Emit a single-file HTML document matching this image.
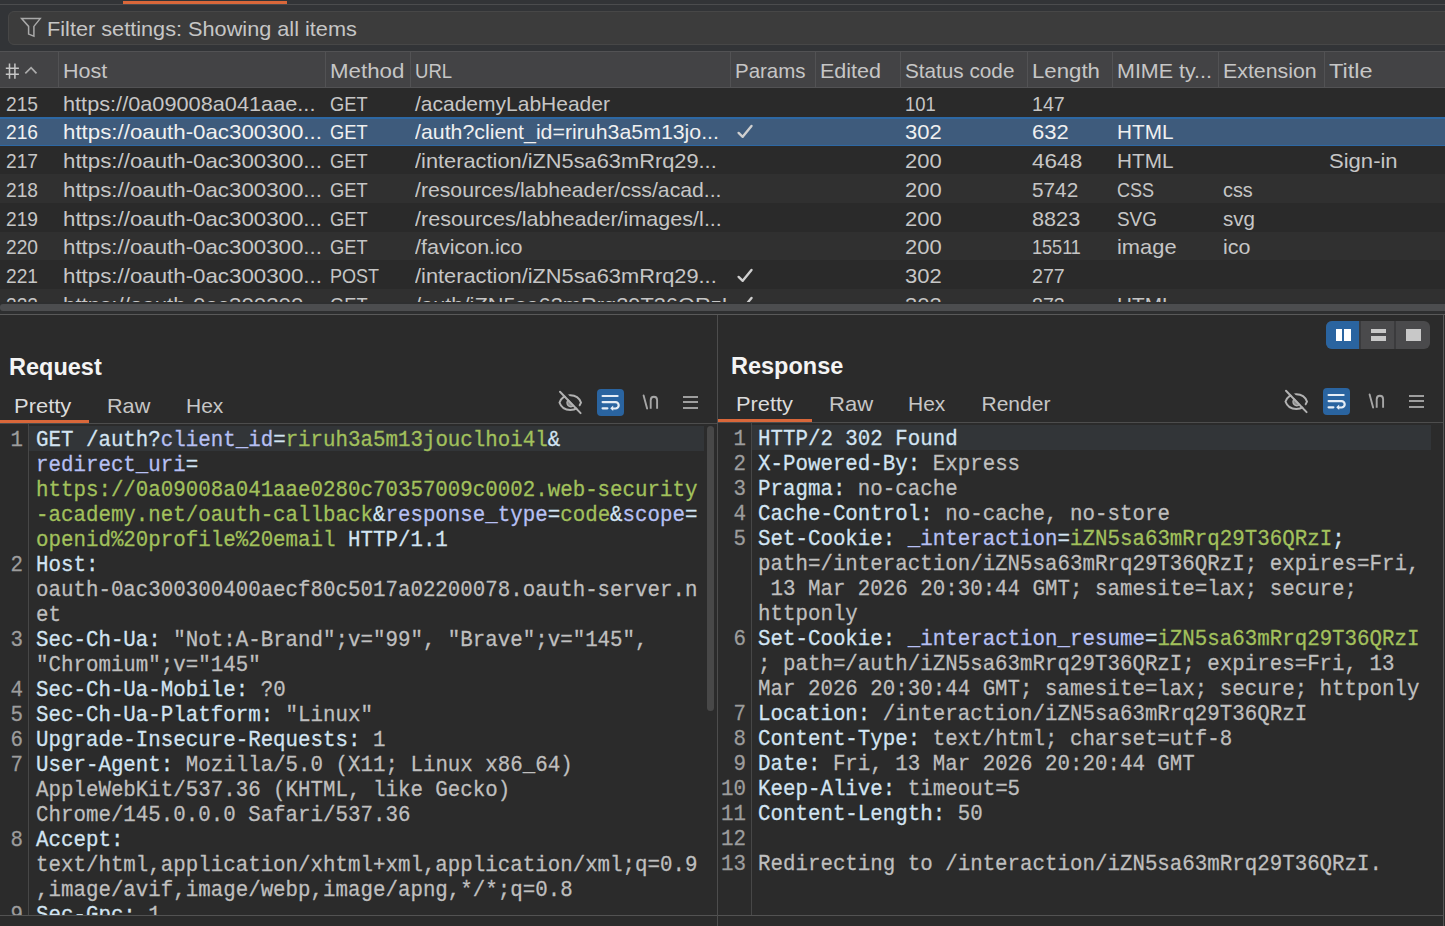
<!DOCTYPE html><html><head><meta charset="utf-8"><style>html,body{margin:0;padding:0;}body{width:1445px;height:926px;overflow:hidden;position:relative;background:#2b2b2b;font-family:'Liberation Sans', sans-serif;}</style></head><body>
<div style="position:absolute;left:0px;top:0px;width:1445px;height:51px;background:#323437;"></div>
<div style="position:absolute;left:0px;top:4px;width:1445px;height:1px;background:#4b4c4e;"></div>
<div style="position:absolute;left:123px;top:1px;width:164px;height:3px;background:#d9673a;"></div>
<div style="position:absolute;left:8px;top:11px;width:1445px;height:34px;background:#3c3c3c;box-sizing:border-box;border:1px solid #474747;border-radius:6px;"></div>
<svg style="position:absolute;left:19px;top:16px" width="24" height="22" viewBox="0 0 24 22"><path d="M2.6 2.6 H21.2 L14.9 10.4 V20.1 L9.6 18.1 V10.4 Z" fill="none" stroke="#a9a9a9" stroke-width="1.5" stroke-linejoin="miter"/></svg>
<div style="position:absolute;left:46.5px;top:15.92px;line-height:26px;font-size:21px;font-family:'Liberation Sans', sans-serif;font-weight:normal;color:#c6c6c6;white-space:pre;transform:scaleX(1.0330);transform-origin:0 0;">Filter settings: Showing all items</div>
<div style="position:absolute;left:0px;top:51px;width:1445px;height:37px;background:#434345;"></div>
<div style="position:absolute;left:0px;top:51px;width:1445px;height:1px;background:#525254;"></div>
<div style="position:absolute;left:0px;top:87px;width:1445px;height:1px;background:#525254;"></div>
<div style="position:absolute;left:58px;top:52px;width:1px;height:35px;background:#525254;"></div>
<div style="position:absolute;left:325px;top:52px;width:1px;height:35px;background:#525254;"></div>
<div style="position:absolute;left:410px;top:52px;width:1px;height:35px;background:#525254;"></div>
<div style="position:absolute;left:730px;top:52px;width:1px;height:35px;background:#525254;"></div>
<div style="position:absolute;left:815px;top:52px;width:1px;height:35px;background:#525254;"></div>
<div style="position:absolute;left:900px;top:52px;width:1px;height:35px;background:#525254;"></div>
<div style="position:absolute;left:1027px;top:52px;width:1px;height:35px;background:#525254;"></div>
<div style="position:absolute;left:1112px;top:52px;width:1px;height:35px;background:#525254;"></div>
<div style="position:absolute;left:1218px;top:52px;width:1px;height:35px;background:#525254;"></div>
<div style="position:absolute;left:1324px;top:52px;width:1px;height:35px;background:#525254;"></div>
<svg style="position:absolute;left:0;top:55px" width="24" height="30" viewBox="0 0 24 30"><path d="M9.5 8.6 V23.7 M14.9 8.6 V23.7 M5.8 13.2 H18.9 M5.8 19.3 H18.9" stroke="#c6c6c6" stroke-width="1.5"/></svg>
<div style="position:absolute;left:63px;top:58.22px;line-height:26px;font-size:21px;font-family:'Liberation Sans', sans-serif;font-weight:normal;color:#c6c6c6;white-space:pre;transform:scaleX(1.0233);transform-origin:0 0;">Host</div>
<div style="position:absolute;left:330px;top:58.22px;line-height:26px;font-size:21px;font-family:'Liberation Sans', sans-serif;font-weight:normal;color:#c6c6c6;white-space:pre;transform:scaleX(1.0609);transform-origin:0 0;">Method</div>
<div style="position:absolute;left:415px;top:58.22px;line-height:26px;font-size:21px;font-family:'Liberation Sans', sans-serif;font-weight:normal;color:#c6c6c6;white-space:pre;transform:scaleX(0.8829);transform-origin:0 0;">URL</div>
<div style="position:absolute;left:735px;top:58.22px;line-height:26px;font-size:21px;font-family:'Liberation Sans', sans-serif;font-weight:normal;color:#c6c6c6;white-space:pre;transform:scaleX(0.9750);transform-origin:0 0;">Params</div>
<div style="position:absolute;left:820px;top:58.22px;line-height:26px;font-size:21px;font-family:'Liberation Sans', sans-serif;font-weight:normal;color:#c6c6c6;white-space:pre;transform:scaleX(1.0241);transform-origin:0 0;">Edited</div>
<div style="position:absolute;left:905px;top:58.22px;line-height:26px;font-size:21px;font-family:'Liberation Sans', sans-serif;font-weight:normal;color:#c6c6c6;white-space:pre;transform:scaleX(0.9864);transform-origin:0 0;">Status code</div>
<div style="position:absolute;left:1032px;top:58.22px;line-height:26px;font-size:21px;font-family:'Liberation Sans', sans-serif;font-weight:normal;color:#c6c6c6;white-space:pre;transform:scaleX(1.0571);transform-origin:0 0;">Length</div>
<div style="position:absolute;left:1117px;top:58.22px;line-height:26px;font-size:21px;font-family:'Liberation Sans', sans-serif;font-weight:normal;color:#c6c6c6;white-space:pre;transform:scaleX(1.0220);transform-origin:0 0;">MIME ty...</div>
<div style="position:absolute;left:1223px;top:58.22px;line-height:26px;font-size:21px;font-family:'Liberation Sans', sans-serif;font-weight:normal;color:#c6c6c6;white-space:pre;transform:scaleX(1.0154);transform-origin:0 0;">Extension</div>
<div style="position:absolute;left:1329px;top:58.22px;line-height:26px;font-size:21px;font-family:'Liberation Sans', sans-serif;font-weight:normal;color:#c6c6c6;white-space:pre;transform:scaleX(1.1184);transform-origin:0 0;">Title</div>
<svg style="position:absolute;left:24px;top:65px" width="14" height="10" viewBox="0 0 14 10"><path d="M1.3 8.3 L7.1 2.7 L12.5 8.3" fill="none" stroke="#ababab" stroke-width="1.7"/></svg>
<div style="position:absolute;left:0;top:88px;width:1445px;height:214px;overflow:hidden;">
<div style="position:absolute;left:0px;top:0px;width:1445px;height:29px;background:#2a2a2a;"></div>
<div style="position:absolute;left:6px;top:2.72px;line-height:26px;font-size:21px;font-family:'Liberation Sans', sans-serif;font-weight:normal;color:#c6c6c6;white-space:pre;transform:scaleX(0.9147);transform-origin:0 0;">215</div>
<div style="position:absolute;left:63px;top:2.72px;line-height:26px;font-size:21px;font-family:'Liberation Sans', sans-serif;font-weight:normal;color:#c6c6c6;white-space:pre;transform:scaleX(1.0343);transform-origin:0 0;">https://0a09008a041aae...</div>
<div style="position:absolute;left:330px;top:2.72px;line-height:26px;font-size:21px;font-family:'Liberation Sans', sans-serif;font-weight:normal;color:#c6c6c6;white-space:pre;transform:scaleX(0.8698);transform-origin:0 0;">GET</div>
<div style="position:absolute;left:415px;top:2.72px;line-height:26px;font-size:21px;font-family:'Liberation Sans', sans-serif;font-weight:normal;color:#c6c6c6;white-space:pre;">/academyLabHeader</div>
<div style="position:absolute;left:905px;top:2.72px;line-height:26px;font-size:21px;font-family:'Liberation Sans', sans-serif;font-weight:normal;color:#c6c6c6;white-space:pre;transform:scaleX(0.8765);transform-origin:0 0;">101</div>
<div style="position:absolute;left:1032px;top:2.72px;line-height:26px;font-size:21px;font-family:'Liberation Sans', sans-serif;font-weight:normal;color:#c6c6c6;white-space:pre;transform:scaleX(0.9353);transform-origin:0 0;">147</div>
<div style="position:absolute;left:0px;top:29px;width:1445px;height:29px;background:#3e5b7c;"></div>
<div style="position:absolute;left:0px;top:29px;width:1445px;height:2px;background:#2d68a4;"></div>
<div style="position:absolute;left:0px;top:57px;width:1445px;height:1px;background:#2d68a4;"></div>
<div style="position:absolute;left:6px;top:31.47px;line-height:26px;font-size:21px;font-family:'Liberation Sans', sans-serif;font-weight:normal;color:#f0f0f0;white-space:pre;transform:scaleX(0.9147);transform-origin:0 0;">216</div>
<div style="position:absolute;left:63px;top:31.47px;line-height:26px;font-size:21px;font-family:'Liberation Sans', sans-serif;font-weight:normal;color:#f0f0f0;white-space:pre;transform:scaleX(1.0612);transform-origin:0 0;">https://oauth-0ac300300...</div>
<div style="position:absolute;left:330px;top:31.47px;line-height:26px;font-size:21px;font-family:'Liberation Sans', sans-serif;font-weight:normal;color:#f0f0f0;white-space:pre;transform:scaleX(0.8698);transform-origin:0 0;">GET</div>
<div style="position:absolute;left:415px;top:31.47px;line-height:26px;font-size:21px;font-family:'Liberation Sans', sans-serif;font-weight:normal;color:#f0f0f0;white-space:pre;transform:scaleX(1.0151);transform-origin:0 0;">/auth?client_id=riruh3a5m13jo...</div>
<svg style="position:absolute;left:735px;top:28.75px" width="24" height="29" viewBox="0 0 24 29"><path d="M3.6 15.9 L7.7 19.8 L16.5 8.9" fill="none" stroke="#cfcfcf" stroke-width="2.4" stroke-linecap="round" stroke-linejoin="round"/></svg>
<div style="position:absolute;left:905px;top:31.47px;line-height:26px;font-size:21px;font-family:'Liberation Sans', sans-serif;font-weight:normal;color:#f0f0f0;white-space:pre;transform:scaleX(1.0471);transform-origin:0 0;">302</div>
<div style="position:absolute;left:1032px;top:31.47px;line-height:26px;font-size:21px;font-family:'Liberation Sans', sans-serif;font-weight:normal;color:#f0f0f0;white-space:pre;transform:scaleX(1.0500);transform-origin:0 0;">632</div>
<div style="position:absolute;left:1117px;top:31.47px;line-height:26px;font-size:21px;font-family:'Liberation Sans', sans-serif;font-weight:normal;color:#f0f0f0;white-space:pre;transform:scaleX(0.9877);transform-origin:0 0;">HTML</div>
<div style="position:absolute;left:0px;top:58px;width:1445px;height:28px;background:#2a2a2a;"></div>
<div style="position:absolute;left:6px;top:60.22px;line-height:26px;font-size:21px;font-family:'Liberation Sans', sans-serif;font-weight:normal;color:#c6c6c6;white-space:pre;transform:scaleX(0.9147);transform-origin:0 0;">217</div>
<div style="position:absolute;left:63px;top:60.22px;line-height:26px;font-size:21px;font-family:'Liberation Sans', sans-serif;font-weight:normal;color:#c6c6c6;white-space:pre;transform:scaleX(1.0612);transform-origin:0 0;">https://oauth-0ac300300...</div>
<div style="position:absolute;left:330px;top:60.22px;line-height:26px;font-size:21px;font-family:'Liberation Sans', sans-serif;font-weight:normal;color:#c6c6c6;white-space:pre;transform:scaleX(0.8698);transform-origin:0 0;">GET</div>
<div style="position:absolute;left:415px;top:60.22px;line-height:26px;font-size:21px;font-family:'Liberation Sans', sans-serif;font-weight:normal;color:#c6c6c6;white-space:pre;transform:scaleX(1.0381);transform-origin:0 0;">/interaction/iZN5sa63mRrq29...</div>
<div style="position:absolute;left:905px;top:60.22px;line-height:26px;font-size:21px;font-family:'Liberation Sans', sans-serif;font-weight:normal;color:#c6c6c6;white-space:pre;transform:scaleX(1.0471);transform-origin:0 0;">200</div>
<div style="position:absolute;left:1032px;top:60.22px;line-height:26px;font-size:21px;font-family:'Liberation Sans', sans-serif;font-weight:normal;color:#c6c6c6;white-space:pre;transform:scaleX(1.0739);transform-origin:0 0;">4648</div>
<div style="position:absolute;left:1117px;top:60.22px;line-height:26px;font-size:21px;font-family:'Liberation Sans', sans-serif;font-weight:normal;color:#c6c6c6;white-space:pre;transform:scaleX(0.9877);transform-origin:0 0;">HTML</div>
<div style="position:absolute;left:1329px;top:60.22px;line-height:26px;font-size:21px;font-family:'Liberation Sans', sans-serif;font-weight:normal;color:#c6c6c6;white-space:pre;transform:scaleX(1.0500);transform-origin:0 0;">Sign-in</div>
<div style="position:absolute;left:0px;top:86px;width:1445px;height:29px;background:#303030;"></div>
<div style="position:absolute;left:6px;top:88.97px;line-height:26px;font-size:21px;font-family:'Liberation Sans', sans-serif;font-weight:normal;color:#c6c6c6;white-space:pre;transform:scaleX(0.9147);transform-origin:0 0;">218</div>
<div style="position:absolute;left:63px;top:88.97px;line-height:26px;font-size:21px;font-family:'Liberation Sans', sans-serif;font-weight:normal;color:#c6c6c6;white-space:pre;transform:scaleX(1.0612);transform-origin:0 0;">https://oauth-0ac300300...</div>
<div style="position:absolute;left:330px;top:88.97px;line-height:26px;font-size:21px;font-family:'Liberation Sans', sans-serif;font-weight:normal;color:#c6c6c6;white-space:pre;transform:scaleX(0.8698);transform-origin:0 0;">GET</div>
<div style="position:absolute;left:415px;top:88.97px;line-height:26px;font-size:21px;font-family:'Liberation Sans', sans-serif;font-weight:normal;color:#c6c6c6;white-space:pre;transform:scaleX(1.0099);transform-origin:0 0;">/resources/labheader/css/acad...</div>
<div style="position:absolute;left:905px;top:88.97px;line-height:26px;font-size:21px;font-family:'Liberation Sans', sans-serif;font-weight:normal;color:#c6c6c6;white-space:pre;transform:scaleX(1.0471);transform-origin:0 0;">200</div>
<div style="position:absolute;left:1032px;top:88.97px;line-height:26px;font-size:21px;font-family:'Liberation Sans', sans-serif;font-weight:normal;color:#c6c6c6;white-space:pre;transform:scaleX(0.9891);transform-origin:0 0;">5742</div>
<div style="position:absolute;left:1117px;top:88.97px;line-height:26px;font-size:21px;font-family:'Liberation Sans', sans-serif;font-weight:normal;color:#c6c6c6;white-space:pre;transform:scaleX(0.8571);transform-origin:0 0;">CSS</div>
<div style="position:absolute;left:1223px;top:88.97px;line-height:26px;font-size:21px;font-family:'Liberation Sans', sans-serif;font-weight:normal;color:#c6c6c6;white-space:pre;transform:scaleX(0.9452);transform-origin:0 0;">css</div>
<div style="position:absolute;left:0px;top:115px;width:1445px;height:29px;background:#2a2a2a;"></div>
<div style="position:absolute;left:6px;top:117.72px;line-height:26px;font-size:21px;font-family:'Liberation Sans', sans-serif;font-weight:normal;color:#c6c6c6;white-space:pre;transform:scaleX(0.9147);transform-origin:0 0;">219</div>
<div style="position:absolute;left:63px;top:117.72px;line-height:26px;font-size:21px;font-family:'Liberation Sans', sans-serif;font-weight:normal;color:#c6c6c6;white-space:pre;transform:scaleX(1.0612);transform-origin:0 0;">https://oauth-0ac300300...</div>
<div style="position:absolute;left:330px;top:117.72px;line-height:26px;font-size:21px;font-family:'Liberation Sans', sans-serif;font-weight:normal;color:#c6c6c6;white-space:pre;transform:scaleX(0.8698);transform-origin:0 0;">GET</div>
<div style="position:absolute;left:415px;top:117.72px;line-height:26px;font-size:21px;font-family:'Liberation Sans', sans-serif;font-weight:normal;color:#c6c6c6;white-space:pre;transform:scaleX(1.0269);transform-origin:0 0;">/resources/labheader/images/l...</div>
<div style="position:absolute;left:905px;top:117.72px;line-height:26px;font-size:21px;font-family:'Liberation Sans', sans-serif;font-weight:normal;color:#c6c6c6;white-space:pre;transform:scaleX(1.0471);transform-origin:0 0;">200</div>
<div style="position:absolute;left:1032px;top:117.72px;line-height:26px;font-size:21px;font-family:'Liberation Sans', sans-serif;font-weight:normal;color:#c6c6c6;white-space:pre;transform:scaleX(1.0326);transform-origin:0 0;">8823</div>
<div style="position:absolute;left:1117px;top:117.72px;line-height:26px;font-size:21px;font-family:'Liberation Sans', sans-serif;font-weight:normal;color:#c6c6c6;white-space:pre;transform:scaleX(0.9000);transform-origin:0 0;">SVG</div>
<div style="position:absolute;left:1223px;top:117.72px;line-height:26px;font-size:21px;font-family:'Liberation Sans', sans-serif;font-weight:normal;color:#c6c6c6;white-space:pre;transform:scaleX(0.9781);transform-origin:0 0;">svg</div>
<div style="position:absolute;left:0px;top:144px;width:1445px;height:28px;background:#303030;"></div>
<div style="position:absolute;left:6px;top:146.47px;line-height:26px;font-size:21px;font-family:'Liberation Sans', sans-serif;font-weight:normal;color:#c6c6c6;white-space:pre;transform:scaleX(0.9147);transform-origin:0 0;">220</div>
<div style="position:absolute;left:63px;top:146.47px;line-height:26px;font-size:21px;font-family:'Liberation Sans', sans-serif;font-weight:normal;color:#c6c6c6;white-space:pre;transform:scaleX(1.0612);transform-origin:0 0;">https://oauth-0ac300300...</div>
<div style="position:absolute;left:330px;top:146.47px;line-height:26px;font-size:21px;font-family:'Liberation Sans', sans-serif;font-weight:normal;color:#c6c6c6;white-space:pre;transform:scaleX(0.8698);transform-origin:0 0;">GET</div>
<div style="position:absolute;left:415px;top:146.47px;line-height:26px;font-size:21px;font-family:'Liberation Sans', sans-serif;font-weight:normal;color:#c6c6c6;white-space:pre;transform:scaleX(1.0240);transform-origin:0 0;">/favicon.ico</div>
<div style="position:absolute;left:905px;top:146.47px;line-height:26px;font-size:21px;font-family:'Liberation Sans', sans-serif;font-weight:normal;color:#c6c6c6;white-space:pre;transform:scaleX(1.0471);transform-origin:0 0;">200</div>
<div style="position:absolute;left:1032px;top:146.47px;line-height:26px;font-size:21px;font-family:'Liberation Sans', sans-serif;font-weight:normal;color:#c6c6c6;white-space:pre;transform:scaleX(0.8607);transform-origin:0 0;">15511</div>
<div style="position:absolute;left:1117px;top:146.47px;line-height:26px;font-size:21px;font-family:'Liberation Sans', sans-serif;font-weight:normal;color:#c6c6c6;white-space:pre;transform:scaleX(1.0411);transform-origin:0 0;">image</div>
<div style="position:absolute;left:1223px;top:146.47px;line-height:26px;font-size:21px;font-family:'Liberation Sans', sans-serif;font-weight:normal;color:#c6c6c6;white-space:pre;transform:scaleX(1.0231);transform-origin:0 0;">ico</div>
<div style="position:absolute;left:0px;top:172px;width:1445px;height:29px;background:#2a2a2a;"></div>
<div style="position:absolute;left:6px;top:175.22px;line-height:26px;font-size:21px;font-family:'Liberation Sans', sans-serif;font-weight:normal;color:#c6c6c6;white-space:pre;transform:scaleX(0.9147);transform-origin:0 0;">221</div>
<div style="position:absolute;left:63px;top:175.22px;line-height:26px;font-size:21px;font-family:'Liberation Sans', sans-serif;font-weight:normal;color:#c6c6c6;white-space:pre;transform:scaleX(1.0612);transform-origin:0 0;">https://oauth-0ac300300...</div>
<div style="position:absolute;left:330px;top:175.22px;line-height:26px;font-size:21px;font-family:'Liberation Sans', sans-serif;font-weight:normal;color:#c6c6c6;white-space:pre;transform:scaleX(0.8596);transform-origin:0 0;">POST</div>
<div style="position:absolute;left:415px;top:175.22px;line-height:26px;font-size:21px;font-family:'Liberation Sans', sans-serif;font-weight:normal;color:#c6c6c6;white-space:pre;transform:scaleX(1.0381);transform-origin:0 0;">/interaction/iZN5sa63mRrq29...</div>
<svg style="position:absolute;left:735px;top:172.5px" width="24" height="29" viewBox="0 0 24 29"><path d="M3.6 15.9 L7.7 19.8 L16.5 8.9" fill="none" stroke="#cfcfcf" stroke-width="2.4" stroke-linecap="round" stroke-linejoin="round"/></svg>
<div style="position:absolute;left:905px;top:175.22px;line-height:26px;font-size:21px;font-family:'Liberation Sans', sans-serif;font-weight:normal;color:#c6c6c6;white-space:pre;transform:scaleX(1.0471);transform-origin:0 0;">302</div>
<div style="position:absolute;left:1032px;top:175.22px;line-height:26px;font-size:21px;font-family:'Liberation Sans', sans-serif;font-weight:normal;color:#c6c6c6;white-space:pre;transform:scaleX(0.9353);transform-origin:0 0;">277</div>
<div style="position:absolute;left:0px;top:201px;width:1445px;height:29px;background:#303030;"></div>
<div style="position:absolute;left:6px;top:203.97px;line-height:26px;font-size:21px;font-family:'Liberation Sans', sans-serif;font-weight:normal;color:#c6c6c6;white-space:pre;transform:scaleX(0.9147);transform-origin:0 0;">222</div>
<div style="position:absolute;left:63px;top:203.97px;line-height:26px;font-size:21px;font-family:'Liberation Sans', sans-serif;font-weight:normal;color:#c6c6c6;white-space:pre;transform:scaleX(1.0612);transform-origin:0 0;">https://oauth-0ac300300...</div>
<div style="position:absolute;left:330px;top:203.97px;line-height:26px;font-size:21px;font-family:'Liberation Sans', sans-serif;font-weight:normal;color:#c6c6c6;white-space:pre;transform:scaleX(0.8698);transform-origin:0 0;">GET</div>
<div style="position:absolute;left:415px;top:203.97px;line-height:26px;font-size:21px;font-family:'Liberation Sans', sans-serif;font-weight:normal;color:#c6c6c6;white-space:pre;transform:scaleX(1.0381);transform-origin:0 0;">/auth/iZN5sa63mRrq29T36QRzI</div>
<svg style="position:absolute;left:735px;top:201.25px" width="24" height="29" viewBox="0 0 24 29"><path d="M3.6 15.9 L7.7 19.8 L16.5 8.9" fill="none" stroke="#cfcfcf" stroke-width="2.4" stroke-linecap="round" stroke-linejoin="round"/></svg>
<div style="position:absolute;left:905px;top:203.97px;line-height:26px;font-size:21px;font-family:'Liberation Sans', sans-serif;font-weight:normal;color:#c6c6c6;white-space:pre;transform:scaleX(1.0471);transform-origin:0 0;">302</div>
<div style="position:absolute;left:1032px;top:203.97px;line-height:26px;font-size:21px;font-family:'Liberation Sans', sans-serif;font-weight:normal;color:#c6c6c6;white-space:pre;transform:scaleX(0.9353);transform-origin:0 0;">873</div>
<div style="position:absolute;left:1117px;top:203.97px;line-height:26px;font-size:21px;font-family:'Liberation Sans', sans-serif;font-weight:normal;color:#c6c6c6;white-space:pre;transform:scaleX(0.9877);transform-origin:0 0;">HTML</div>
</div>
<div style="position:absolute;left:0px;top:302px;width:1445px;height:12px;background:#2e2f30;"></div>
<div style="position:absolute;left:0px;top:304px;width:1445px;height:7px;background:#4c4d4f;border-radius:3px 0 0 3px;"></div>
<div style="position:absolute;left:0px;top:314px;width:1445px;height:1px;background:#595959;"></div>
<div style="position:absolute;left:0px;top:915px;width:1443px;height:1px;background:#525252;"></div>
<div style="position:absolute;left:717px;top:315px;width:1px;height:611px;background:#4d4d4d;"></div>
<div style="position:absolute;left:1443px;top:315px;width:1px;height:611px;background:#565656;"></div>
<div style="position:absolute;left:9px;top:353.35px;line-height:29px;font-size:23.5px;font-family:'Liberation Sans', sans-serif;font-weight:bold;color:#f4f4f4;white-space:pre;">Request</div>
<div style="position:absolute;left:14px;top:392.72px;line-height:26px;font-size:21px;font-family:'Liberation Sans', sans-serif;font-weight:normal;color:#dcdcdc;white-space:pre;transform:scaleX(1.0450);transform-origin:0 0;">Pretty</div>
<div style="position:absolute;left:107.3px;top:392.72px;line-height:26px;font-size:21px;font-family:'Liberation Sans', sans-serif;font-weight:normal;color:#c6c6c6;white-space:pre;transform:scaleX(1.0300);transform-origin:0 0;">Raw</div>
<div style="position:absolute;left:186px;top:392.72px;line-height:26px;font-size:21px;font-family:'Liberation Sans', sans-serif;font-weight:normal;color:#c6c6c6;white-space:pre;">Hex</div>
<div style="position:absolute;left:0px;top:420px;width:89px;height:3px;background:#d9673a;"></div>
<div style="position:absolute;left:89px;top:423px;width:628px;height:1px;background:#4d4d4d;"></div>
<div style="position:absolute;left:0px;top:423px;width:89px;height:1px;background:#4d4d4d;"></div>
<div style="position:absolute;left:731px;top:351.85px;line-height:29px;font-size:23.5px;font-family:'Liberation Sans', sans-serif;font-weight:bold;color:#f4f4f4;white-space:pre;">Response</div>
<div style="position:absolute;left:736px;top:391.22px;line-height:26px;font-size:21px;font-family:'Liberation Sans', sans-serif;font-weight:normal;color:#dcdcdc;white-space:pre;transform:scaleX(1.0400);transform-origin:0 0;">Pretty</div>
<div style="position:absolute;left:829px;top:391.22px;line-height:26px;font-size:21px;font-family:'Liberation Sans', sans-serif;font-weight:normal;color:#c6c6c6;white-space:pre;transform:scaleX(1.0500);transform-origin:0 0;">Raw</div>
<div style="position:absolute;left:908px;top:391.22px;line-height:26px;font-size:21px;font-family:'Liberation Sans', sans-serif;font-weight:normal;color:#c6c6c6;white-space:pre;">Hex</div>
<div style="position:absolute;left:981.5px;top:391.22px;line-height:26px;font-size:21px;font-family:'Liberation Sans', sans-serif;font-weight:normal;color:#c6c6c6;white-space:pre;">Render</div>
<div style="position:absolute;left:718px;top:419px;width:94px;height:3px;background:#d9673a;"></div>
<div style="position:absolute;left:718px;top:422px;width:725px;height:1px;background:#4d4d4d;"></div>
<div style="position:absolute;left:1326px;top:321px;width:104px;height:28px;border-radius:6px;overflow:hidden;background:#4a4a4c"><div style="position:absolute;left:0;top:0;width:33px;height:28px;background:#2a64a0"></div><div style="position:absolute;left:33px;top:0;width:2px;height:28px;background:#3b3b3d"></div><div style="position:absolute;left:68px;top:0;width:2px;height:28px;background:#3b3b3d"></div><div style="position:absolute;left:9.5px;top:7.5px;width:6.5px;height:12.5px;background:#fff"></div><div style="position:absolute;left:18.2px;top:7.5px;width:6.5px;height:12.5px;background:#fff"></div><div style="position:absolute;left:44.5px;top:7.5px;width:15px;height:4.6px;background:#c8c8c8"></div><div style="position:absolute;left:44.5px;top:15px;width:15px;height:5px;background:#c8c8c8"></div><div style="position:absolute;left:79.5px;top:7.5px;width:15px;height:12.5px;background:#c8c8c8"></div></div>
<svg style="position:absolute;left:554px;top:386px" width="36" height="32" viewBox="0 0 36 32"><path d="M5.5 16.6 C9 6.8 23.5 6.8 27 16.6 C23.5 26.4 9 26.4 5.5 16.6 Z" fill="none" stroke="#b2b2b2" stroke-width="1.9"/><path d="M14.2 14.0 A3.3 3.3 0 0 0 19.6 19.6 Z" fill="#8c8c8c" stroke="#b2b2b2" stroke-width="1.4"/><path d="M7.7 4.1 L28.3 25.4" stroke="#2b2b2b" stroke-width="3"/><path d="M6 5.8 L26.6 27.1" stroke="#b2b2b2" stroke-width="2" stroke-linecap="round"/></svg>
<div style="position:absolute;left:597px;top:389px;width:27px;height:27px;border-radius:4px;background:#2a64a0"></div>
<svg style="position:absolute;left:597px;top:389px" width="27" height="27" viewBox="0 0 27 27"><path d="M5.6 7 H20.6" stroke="#e6edf5" stroke-width="2.2" stroke-linecap="round"/><path d="M5.6 13.1 H18.5 A3.2 3.2 0 0 1 18.5 19.5 H15.5" fill="none" stroke="#e6edf5" stroke-width="2.2" stroke-linecap="round"/><path d="M16.2 16.6 L13.2 19.3 L16.2 22 Z" fill="#e6edf5"/><path d="M5.6 19.3 H10.4" stroke="#e6edf5" stroke-width="2.2" stroke-linecap="round"/></svg>
<svg style="position:absolute;left:640px;top:392px" width="22" height="20" viewBox="0 0 22 20"><path d="M3.6 3.5 L7.1 16.6" stroke="#a6a6a6" stroke-width="1.9" stroke-linecap="round"/><path d="M10.7 16.8 V8.2 C10.7 3.6 17.1 3.6 17.1 8.2 V16.8" fill="none" stroke="#a6a6a6" stroke-width="1.9"/></svg>
<div style="position:absolute;left:683px;top:395.9px;width:15px;height:2px;background:#9e9e9e;"></div>
<div style="position:absolute;left:683px;top:401.45px;width:15px;height:2px;background:#9e9e9e;"></div>
<div style="position:absolute;left:683px;top:407.0px;width:15px;height:2px;background:#9e9e9e;"></div>
<svg style="position:absolute;left:1280px;top:384.7px" width="36" height="32" viewBox="0 0 36 32"><path d="M5.5 16.6 C9 6.8 23.5 6.8 27 16.6 C23.5 26.4 9 26.4 5.5 16.6 Z" fill="none" stroke="#b2b2b2" stroke-width="1.9"/><path d="M14.2 14.0 A3.3 3.3 0 0 0 19.6 19.6 Z" fill="#8c8c8c" stroke="#b2b2b2" stroke-width="1.4"/><path d="M7.7 4.1 L28.3 25.4" stroke="#2b2b2b" stroke-width="3"/><path d="M6 5.8 L26.6 27.1" stroke="#b2b2b2" stroke-width="2" stroke-linecap="round"/></svg>
<div style="position:absolute;left:1323px;top:387.7px;width:27px;height:27px;border-radius:4px;background:#2a64a0"></div>
<svg style="position:absolute;left:1323px;top:387.7px" width="27" height="27" viewBox="0 0 27 27"><path d="M5.6 7 H20.6" stroke="#e6edf5" stroke-width="2.2" stroke-linecap="round"/><path d="M5.6 13.1 H18.5 A3.2 3.2 0 0 1 18.5 19.5 H15.5" fill="none" stroke="#e6edf5" stroke-width="2.2" stroke-linecap="round"/><path d="M16.2 16.6 L13.2 19.3 L16.2 22 Z" fill="#e6edf5"/><path d="M5.6 19.3 H10.4" stroke="#e6edf5" stroke-width="2.2" stroke-linecap="round"/></svg>
<svg style="position:absolute;left:1366px;top:390.7px" width="22" height="20" viewBox="0 0 22 20"><path d="M3.6 3.5 L7.1 16.6" stroke="#a6a6a6" stroke-width="1.9" stroke-linecap="round"/><path d="M10.7 16.8 V8.2 C10.7 3.6 17.1 3.6 17.1 8.2 V16.8" fill="none" stroke="#a6a6a6" stroke-width="1.9"/></svg>
<div style="position:absolute;left:1409px;top:394.59999999999997px;width:15px;height:2px;background:#9e9e9e;"></div>
<div style="position:absolute;left:1409px;top:400.15px;width:15px;height:2px;background:#9e9e9e;"></div>
<div style="position:absolute;left:1409px;top:405.7px;width:15px;height:2px;background:#9e9e9e;"></div>
<div style="position:absolute;left:0px;top:424px;width:717px;height:491px;overflow:hidden;">
<div style="position:absolute;left:28px;top:0px;width:1px;height:491px;background:#474747;"></div>
<div style="position:absolute;left:29px;top:2px;width:675px;height:25px;background:#323538;"></div>
<div style="position:absolute;left:10.52px;top:3.76px;line-height:26px;font-size:20.8px;font-family:'Liberation Mono', monospace;font-weight:normal;color:#9d9d9d;white-space:pre;transform:scaleY(1.07);transform-origin:0 18.53px;-webkit-text-stroke:0.25px currentColor;">1</div>
<div style="position:absolute;left:36px;top:3.76px;line-height:26px;font-size:20.8px;font-family:'Liberation Mono', monospace;font-weight:normal;color:#c6c6c6;white-space:pre;transform:scaleY(1.07);transform-origin:0 18.53px;-webkit-text-stroke:0.25px currentColor;"><span style="color:#d2e4f2">GET /auth?</span><span style="color:#b7c0f4">client_id</span><span style="color:#d2e4f2">=</span><span style="color:#a2c15c">riruh3a5m13jouclhoi4l</span><span style="color:#d2e4f2">&amp;</span></div>
<div style="position:absolute;left:36px;top:28.76px;line-height:26px;font-size:20.8px;font-family:'Liberation Mono', monospace;font-weight:normal;color:#c6c6c6;white-space:pre;transform:scaleY(1.07);transform-origin:0 18.53px;-webkit-text-stroke:0.25px currentColor;"><span style="color:#b7c0f4">redirect_uri</span><span style="color:#d2e4f2">=</span></div>
<div style="position:absolute;left:36px;top:53.76px;line-height:26px;font-size:20.8px;font-family:'Liberation Mono', monospace;font-weight:normal;color:#c6c6c6;white-space:pre;transform:scaleY(1.07);transform-origin:0 18.53px;-webkit-text-stroke:0.25px currentColor;"><span style="color:#a2c15c">https://0a09008a041aae0280c70357009c0002.web-security</span></div>
<div style="position:absolute;left:36px;top:78.76px;line-height:26px;font-size:20.8px;font-family:'Liberation Mono', monospace;font-weight:normal;color:#c6c6c6;white-space:pre;transform:scaleY(1.07);transform-origin:0 18.53px;-webkit-text-stroke:0.25px currentColor;"><span style="color:#a2c15c">-academy.net/oauth-callback</span><span style="color:#d2e4f2">&amp;</span><span style="color:#b7c0f4">response_type</span><span style="color:#d2e4f2">=</span><span style="color:#a2c15c">code</span><span style="color:#d2e4f2">&amp;</span><span style="color:#b7c0f4">scope</span><span style="color:#d2e4f2">=</span></div>
<div style="position:absolute;left:36px;top:103.76px;line-height:26px;font-size:20.8px;font-family:'Liberation Mono', monospace;font-weight:normal;color:#c6c6c6;white-space:pre;transform:scaleY(1.07);transform-origin:0 18.53px;-webkit-text-stroke:0.25px currentColor;"><span style="color:#a2c15c">openid%20profile%20email</span><span style="color:#d2e4f2"> HTTP/1.1</span></div>
<div style="position:absolute;left:10.52px;top:128.76px;line-height:26px;font-size:20.8px;font-family:'Liberation Mono', monospace;font-weight:normal;color:#9d9d9d;white-space:pre;transform:scaleY(1.07);transform-origin:0 18.53px;-webkit-text-stroke:0.25px currentColor;">2</div>
<div style="position:absolute;left:36px;top:128.76px;line-height:26px;font-size:20.8px;font-family:'Liberation Mono', monospace;font-weight:normal;color:#c6c6c6;white-space:pre;transform:scaleY(1.07);transform-origin:0 18.53px;-webkit-text-stroke:0.25px currentColor;"><span style="color:#d2e4f2">Host:</span></div>
<div style="position:absolute;left:36px;top:153.76px;line-height:26px;font-size:20.8px;font-family:'Liberation Mono', monospace;font-weight:normal;color:#c6c6c6;white-space:pre;transform:scaleY(1.07);transform-origin:0 18.53px;-webkit-text-stroke:0.25px currentColor;"><span style="color:#bfbfbf">oauth-0ac300300400aecf80c5017a02200078.oauth-server.n</span></div>
<div style="position:absolute;left:36px;top:178.76px;line-height:26px;font-size:20.8px;font-family:'Liberation Mono', monospace;font-weight:normal;color:#c6c6c6;white-space:pre;transform:scaleY(1.07);transform-origin:0 18.53px;-webkit-text-stroke:0.25px currentColor;"><span style="color:#bfbfbf">et</span></div>
<div style="position:absolute;left:10.52px;top:203.76px;line-height:26px;font-size:20.8px;font-family:'Liberation Mono', monospace;font-weight:normal;color:#9d9d9d;white-space:pre;transform:scaleY(1.07);transform-origin:0 18.53px;-webkit-text-stroke:0.25px currentColor;">3</div>
<div style="position:absolute;left:36px;top:203.76px;line-height:26px;font-size:20.8px;font-family:'Liberation Mono', monospace;font-weight:normal;color:#c6c6c6;white-space:pre;transform:scaleY(1.07);transform-origin:0 18.53px;-webkit-text-stroke:0.25px currentColor;"><span style="color:#d2e4f2">Sec-Ch-Ua:</span><span style="color:#bfbfbf"> &quot;Not:A-Brand&quot;;v=&quot;99&quot;, &quot;Brave&quot;;v=&quot;145&quot;,</span></div>
<div style="position:absolute;left:36px;top:228.76px;line-height:26px;font-size:20.8px;font-family:'Liberation Mono', monospace;font-weight:normal;color:#c6c6c6;white-space:pre;transform:scaleY(1.07);transform-origin:0 18.53px;-webkit-text-stroke:0.25px currentColor;"><span style="color:#bfbfbf">&quot;Chromium&quot;;v=&quot;145&quot;</span></div>
<div style="position:absolute;left:10.52px;top:253.76px;line-height:26px;font-size:20.8px;font-family:'Liberation Mono', monospace;font-weight:normal;color:#9d9d9d;white-space:pre;transform:scaleY(1.07);transform-origin:0 18.53px;-webkit-text-stroke:0.25px currentColor;">4</div>
<div style="position:absolute;left:36px;top:253.76px;line-height:26px;font-size:20.8px;font-family:'Liberation Mono', monospace;font-weight:normal;color:#c6c6c6;white-space:pre;transform:scaleY(1.07);transform-origin:0 18.53px;-webkit-text-stroke:0.25px currentColor;"><span style="color:#d2e4f2">Sec-Ch-Ua-Mobile:</span><span style="color:#bfbfbf"> ?0</span></div>
<div style="position:absolute;left:10.52px;top:278.76px;line-height:26px;font-size:20.8px;font-family:'Liberation Mono', monospace;font-weight:normal;color:#9d9d9d;white-space:pre;transform:scaleY(1.07);transform-origin:0 18.53px;-webkit-text-stroke:0.25px currentColor;">5</div>
<div style="position:absolute;left:36px;top:278.76px;line-height:26px;font-size:20.8px;font-family:'Liberation Mono', monospace;font-weight:normal;color:#c6c6c6;white-space:pre;transform:scaleY(1.07);transform-origin:0 18.53px;-webkit-text-stroke:0.25px currentColor;"><span style="color:#d2e4f2">Sec-Ch-Ua-Platform:</span><span style="color:#bfbfbf"> &quot;Linux&quot;</span></div>
<div style="position:absolute;left:10.52px;top:303.76px;line-height:26px;font-size:20.8px;font-family:'Liberation Mono', monospace;font-weight:normal;color:#9d9d9d;white-space:pre;transform:scaleY(1.07);transform-origin:0 18.53px;-webkit-text-stroke:0.25px currentColor;">6</div>
<div style="position:absolute;left:36px;top:303.76px;line-height:26px;font-size:20.8px;font-family:'Liberation Mono', monospace;font-weight:normal;color:#c6c6c6;white-space:pre;transform:scaleY(1.07);transform-origin:0 18.53px;-webkit-text-stroke:0.25px currentColor;"><span style="color:#d2e4f2">Upgrade-Insecure-Requests:</span><span style="color:#bfbfbf"> 1</span></div>
<div style="position:absolute;left:10.52px;top:328.76px;line-height:26px;font-size:20.8px;font-family:'Liberation Mono', monospace;font-weight:normal;color:#9d9d9d;white-space:pre;transform:scaleY(1.07);transform-origin:0 18.53px;-webkit-text-stroke:0.25px currentColor;">7</div>
<div style="position:absolute;left:36px;top:328.76px;line-height:26px;font-size:20.8px;font-family:'Liberation Mono', monospace;font-weight:normal;color:#c6c6c6;white-space:pre;transform:scaleY(1.07);transform-origin:0 18.53px;-webkit-text-stroke:0.25px currentColor;"><span style="color:#d2e4f2">User-Agent:</span><span style="color:#bfbfbf"> Mozilla/5.0 (X11; Linux x86_64)</span></div>
<div style="position:absolute;left:36px;top:353.76px;line-height:26px;font-size:20.8px;font-family:'Liberation Mono', monospace;font-weight:normal;color:#c6c6c6;white-space:pre;transform:scaleY(1.07);transform-origin:0 18.53px;-webkit-text-stroke:0.25px currentColor;"><span style="color:#bfbfbf">AppleWebKit/537.36 (KHTML, like Gecko)</span></div>
<div style="position:absolute;left:36px;top:378.76px;line-height:26px;font-size:20.8px;font-family:'Liberation Mono', monospace;font-weight:normal;color:#c6c6c6;white-space:pre;transform:scaleY(1.07);transform-origin:0 18.53px;-webkit-text-stroke:0.25px currentColor;"><span style="color:#bfbfbf">Chrome/145.0.0.0 Safari/537.36</span></div>
<div style="position:absolute;left:10.52px;top:403.76px;line-height:26px;font-size:20.8px;font-family:'Liberation Mono', monospace;font-weight:normal;color:#9d9d9d;white-space:pre;transform:scaleY(1.07);transform-origin:0 18.53px;-webkit-text-stroke:0.25px currentColor;">8</div>
<div style="position:absolute;left:36px;top:403.76px;line-height:26px;font-size:20.8px;font-family:'Liberation Mono', monospace;font-weight:normal;color:#c6c6c6;white-space:pre;transform:scaleY(1.07);transform-origin:0 18.53px;-webkit-text-stroke:0.25px currentColor;"><span style="color:#d2e4f2">Accept:</span></div>
<div style="position:absolute;left:36px;top:428.76px;line-height:26px;font-size:20.8px;font-family:'Liberation Mono', monospace;font-weight:normal;color:#c6c6c6;white-space:pre;transform:scaleY(1.07);transform-origin:0 18.53px;-webkit-text-stroke:0.25px currentColor;"><span style="color:#bfbfbf">text/html,application/xhtml+xml,application/xml;q=0.9</span></div>
<div style="position:absolute;left:36px;top:453.76px;line-height:26px;font-size:20.8px;font-family:'Liberation Mono', monospace;font-weight:normal;color:#c6c6c6;white-space:pre;transform:scaleY(1.07);transform-origin:0 18.53px;-webkit-text-stroke:0.25px currentColor;"><span style="color:#bfbfbf">,image/avif,image/webp,image/apng,*/*;q=0.8</span></div>
<div style="position:absolute;left:10.52px;top:478.76px;line-height:26px;font-size:20.8px;font-family:'Liberation Mono', monospace;font-weight:normal;color:#9d9d9d;white-space:pre;transform:scaleY(1.07);transform-origin:0 18.53px;-webkit-text-stroke:0.25px currentColor;">9</div>
<div style="position:absolute;left:36px;top:478.76px;line-height:26px;font-size:20.8px;font-family:'Liberation Mono', monospace;font-weight:normal;color:#c6c6c6;white-space:pre;transform:scaleY(1.07);transform-origin:0 18.53px;-webkit-text-stroke:0.25px currentColor;"><span style="color:#d2e4f2">Sec-Gpc:</span><span style="color:#bfbfbf"> 1</span></div>
</div>
<div style="position:absolute;left:707px;top:426px;width:7px;height:285px;background:#484848;border-radius:3.5px;"></div>
<div style="position:absolute;left:718px;top:423px;width:725px;height:492px;overflow:hidden;">
<div style="position:absolute;left:33px;top:0px;width:1px;height:492px;background:#474747;"></div>
<div style="position:absolute;left:34px;top:2px;width:679px;height:25px;background:#323538;"></div>
<div style="position:absolute;left:15.519999999999982px;top:4.46px;line-height:26px;font-size:20.8px;font-family:'Liberation Mono', monospace;font-weight:normal;color:#9d9d9d;white-space:pre;transform:scaleY(1.07);transform-origin:0 18.53px;-webkit-text-stroke:0.25px currentColor;">1</div>
<div style="position:absolute;left:40px;top:4.46px;line-height:26px;font-size:20.8px;font-family:'Liberation Mono', monospace;font-weight:normal;color:#c6c6c6;white-space:pre;transform:scaleY(1.07);transform-origin:0 18.53px;-webkit-text-stroke:0.25px currentColor;"><span style="color:#d2e4f2">HTTP/2 302 Found</span></div>
<div style="position:absolute;left:15.519999999999982px;top:29.46px;line-height:26px;font-size:20.8px;font-family:'Liberation Mono', monospace;font-weight:normal;color:#9d9d9d;white-space:pre;transform:scaleY(1.07);transform-origin:0 18.53px;-webkit-text-stroke:0.25px currentColor;">2</div>
<div style="position:absolute;left:40px;top:29.46px;line-height:26px;font-size:20.8px;font-family:'Liberation Mono', monospace;font-weight:normal;color:#c6c6c6;white-space:pre;transform:scaleY(1.07);transform-origin:0 18.53px;-webkit-text-stroke:0.25px currentColor;"><span style="color:#d2e4f2">X-Powered-By:</span><span style="color:#bfbfbf"> Express</span></div>
<div style="position:absolute;left:15.519999999999982px;top:54.46px;line-height:26px;font-size:20.8px;font-family:'Liberation Mono', monospace;font-weight:normal;color:#9d9d9d;white-space:pre;transform:scaleY(1.07);transform-origin:0 18.53px;-webkit-text-stroke:0.25px currentColor;">3</div>
<div style="position:absolute;left:40px;top:54.46px;line-height:26px;font-size:20.8px;font-family:'Liberation Mono', monospace;font-weight:normal;color:#c6c6c6;white-space:pre;transform:scaleY(1.07);transform-origin:0 18.53px;-webkit-text-stroke:0.25px currentColor;"><span style="color:#d2e4f2">Pragma:</span><span style="color:#bfbfbf"> no-cache</span></div>
<div style="position:absolute;left:15.519999999999982px;top:79.46px;line-height:26px;font-size:20.8px;font-family:'Liberation Mono', monospace;font-weight:normal;color:#9d9d9d;white-space:pre;transform:scaleY(1.07);transform-origin:0 18.53px;-webkit-text-stroke:0.25px currentColor;">4</div>
<div style="position:absolute;left:40px;top:79.46px;line-height:26px;font-size:20.8px;font-family:'Liberation Mono', monospace;font-weight:normal;color:#c6c6c6;white-space:pre;transform:scaleY(1.07);transform-origin:0 18.53px;-webkit-text-stroke:0.25px currentColor;"><span style="color:#d2e4f2">Cache-Control:</span><span style="color:#bfbfbf"> no-cache, no-store</span></div>
<div style="position:absolute;left:15.519999999999982px;top:104.46px;line-height:26px;font-size:20.8px;font-family:'Liberation Mono', monospace;font-weight:normal;color:#9d9d9d;white-space:pre;transform:scaleY(1.07);transform-origin:0 18.53px;-webkit-text-stroke:0.25px currentColor;">5</div>
<div style="position:absolute;left:40px;top:104.46px;line-height:26px;font-size:20.8px;font-family:'Liberation Mono', monospace;font-weight:normal;color:#c6c6c6;white-space:pre;transform:scaleY(1.07);transform-origin:0 18.53px;-webkit-text-stroke:0.25px currentColor;"><span style="color:#d2e4f2">Set-Cookie:</span><span style="color:#bfbfbf"> </span><span style="color:#b7c0f4">_interaction</span><span style="color:#d2e4f2">=</span><span style="color:#a2c15c">iZN5sa63mRrq29T36QRzI</span><span style="color:#d2e4f2">;</span></div>
<div style="position:absolute;left:40px;top:129.46px;line-height:26px;font-size:20.8px;font-family:'Liberation Mono', monospace;font-weight:normal;color:#c6c6c6;white-space:pre;transform:scaleY(1.07);transform-origin:0 18.53px;-webkit-text-stroke:0.25px currentColor;"><span style="color:#bfbfbf">path=/interaction/iZN5sa63mRrq29T36QRzI; expires=Fri,</span></div>
<div style="position:absolute;left:40px;top:154.46px;line-height:26px;font-size:20.8px;font-family:'Liberation Mono', monospace;font-weight:normal;color:#c6c6c6;white-space:pre;transform:scaleY(1.07);transform-origin:0 18.53px;-webkit-text-stroke:0.25px currentColor;"><span style="color:#bfbfbf"> 13 Mar 2026 20:30:44 GMT; samesite=lax; secure;</span></div>
<div style="position:absolute;left:40px;top:179.46px;line-height:26px;font-size:20.8px;font-family:'Liberation Mono', monospace;font-weight:normal;color:#c6c6c6;white-space:pre;transform:scaleY(1.07);transform-origin:0 18.53px;-webkit-text-stroke:0.25px currentColor;"><span style="color:#bfbfbf">httponly</span></div>
<div style="position:absolute;left:15.519999999999982px;top:204.46px;line-height:26px;font-size:20.8px;font-family:'Liberation Mono', monospace;font-weight:normal;color:#9d9d9d;white-space:pre;transform:scaleY(1.07);transform-origin:0 18.53px;-webkit-text-stroke:0.25px currentColor;">6</div>
<div style="position:absolute;left:40px;top:204.46px;line-height:26px;font-size:20.8px;font-family:'Liberation Mono', monospace;font-weight:normal;color:#c6c6c6;white-space:pre;transform:scaleY(1.07);transform-origin:0 18.53px;-webkit-text-stroke:0.25px currentColor;"><span style="color:#d2e4f2">Set-Cookie:</span><span style="color:#bfbfbf"> </span><span style="color:#b7c0f4">_interaction_resume</span><span style="color:#d2e4f2">=</span><span style="color:#a2c15c">iZN5sa63mRrq29T36QRzI</span></div>
<div style="position:absolute;left:40px;top:229.46px;line-height:26px;font-size:20.8px;font-family:'Liberation Mono', monospace;font-weight:normal;color:#c6c6c6;white-space:pre;transform:scaleY(1.07);transform-origin:0 18.53px;-webkit-text-stroke:0.25px currentColor;"><span style="color:#bfbfbf">; path=/auth/iZN5sa63mRrq29T36QRzI; expires=Fri, 13</span></div>
<div style="position:absolute;left:40px;top:254.46px;line-height:26px;font-size:20.8px;font-family:'Liberation Mono', monospace;font-weight:normal;color:#c6c6c6;white-space:pre;transform:scaleY(1.07);transform-origin:0 18.53px;-webkit-text-stroke:0.25px currentColor;"><span style="color:#bfbfbf">Mar 2026 20:30:44 GMT; samesite=lax; secure; httponly</span></div>
<div style="position:absolute;left:15.519999999999982px;top:279.46px;line-height:26px;font-size:20.8px;font-family:'Liberation Mono', monospace;font-weight:normal;color:#9d9d9d;white-space:pre;transform:scaleY(1.07);transform-origin:0 18.53px;-webkit-text-stroke:0.25px currentColor;">7</div>
<div style="position:absolute;left:40px;top:279.46px;line-height:26px;font-size:20.8px;font-family:'Liberation Mono', monospace;font-weight:normal;color:#c6c6c6;white-space:pre;transform:scaleY(1.07);transform-origin:0 18.53px;-webkit-text-stroke:0.25px currentColor;"><span style="color:#d2e4f2">Location:</span><span style="color:#bfbfbf"> /interaction/iZN5sa63mRrq29T36QRzI</span></div>
<div style="position:absolute;left:15.519999999999982px;top:304.46px;line-height:26px;font-size:20.8px;font-family:'Liberation Mono', monospace;font-weight:normal;color:#9d9d9d;white-space:pre;transform:scaleY(1.07);transform-origin:0 18.53px;-webkit-text-stroke:0.25px currentColor;">8</div>
<div style="position:absolute;left:40px;top:304.46px;line-height:26px;font-size:20.8px;font-family:'Liberation Mono', monospace;font-weight:normal;color:#c6c6c6;white-space:pre;transform:scaleY(1.07);transform-origin:0 18.53px;-webkit-text-stroke:0.25px currentColor;"><span style="color:#d2e4f2">Content-Type:</span><span style="color:#bfbfbf"> text/html; charset=utf-8</span></div>
<div style="position:absolute;left:15.519999999999982px;top:329.46px;line-height:26px;font-size:20.8px;font-family:'Liberation Mono', monospace;font-weight:normal;color:#9d9d9d;white-space:pre;transform:scaleY(1.07);transform-origin:0 18.53px;-webkit-text-stroke:0.25px currentColor;">9</div>
<div style="position:absolute;left:40px;top:329.46px;line-height:26px;font-size:20.8px;font-family:'Liberation Mono', monospace;font-weight:normal;color:#c6c6c6;white-space:pre;transform:scaleY(1.07);transform-origin:0 18.53px;-webkit-text-stroke:0.25px currentColor;"><span style="color:#d2e4f2">Date:</span><span style="color:#bfbfbf"> Fri, 13 Mar 2026 20:20:44 GMT</span></div>
<div style="position:absolute;left:3.0399999999999636px;top:354.46px;line-height:26px;font-size:20.8px;font-family:'Liberation Mono', monospace;font-weight:normal;color:#9d9d9d;white-space:pre;transform:scaleY(1.07);transform-origin:0 18.53px;-webkit-text-stroke:0.25px currentColor;">10</div>
<div style="position:absolute;left:40px;top:354.46px;line-height:26px;font-size:20.8px;font-family:'Liberation Mono', monospace;font-weight:normal;color:#c6c6c6;white-space:pre;transform:scaleY(1.07);transform-origin:0 18.53px;-webkit-text-stroke:0.25px currentColor;"><span style="color:#d2e4f2">Keep-Alive:</span><span style="color:#bfbfbf"> timeout=5</span></div>
<div style="position:absolute;left:3.0399999999999636px;top:379.46px;line-height:26px;font-size:20.8px;font-family:'Liberation Mono', monospace;font-weight:normal;color:#9d9d9d;white-space:pre;transform:scaleY(1.07);transform-origin:0 18.53px;-webkit-text-stroke:0.25px currentColor;">11</div>
<div style="position:absolute;left:40px;top:379.46px;line-height:26px;font-size:20.8px;font-family:'Liberation Mono', monospace;font-weight:normal;color:#c6c6c6;white-space:pre;transform:scaleY(1.07);transform-origin:0 18.53px;-webkit-text-stroke:0.25px currentColor;"><span style="color:#d2e4f2">Content-Length:</span><span style="color:#bfbfbf"> 50</span></div>
<div style="position:absolute;left:3.0399999999999636px;top:404.46px;line-height:26px;font-size:20.8px;font-family:'Liberation Mono', monospace;font-weight:normal;color:#9d9d9d;white-space:pre;transform:scaleY(1.07);transform-origin:0 18.53px;-webkit-text-stroke:0.25px currentColor;">12</div>
<div style="position:absolute;left:40px;top:404.46px;line-height:26px;font-size:20.8px;font-family:'Liberation Mono', monospace;font-weight:normal;color:#c6c6c6;white-space:pre;transform:scaleY(1.07);transform-origin:0 18.53px;-webkit-text-stroke:0.25px currentColor;"></div>
<div style="position:absolute;left:3.0399999999999636px;top:429.46px;line-height:26px;font-size:20.8px;font-family:'Liberation Mono', monospace;font-weight:normal;color:#9d9d9d;white-space:pre;transform:scaleY(1.07);transform-origin:0 18.53px;-webkit-text-stroke:0.25px currentColor;">13</div>
<div style="position:absolute;left:40px;top:429.46px;line-height:26px;font-size:20.8px;font-family:'Liberation Mono', monospace;font-weight:normal;color:#c6c6c6;white-space:pre;transform:scaleY(1.07);transform-origin:0 18.53px;-webkit-text-stroke:0.25px currentColor;"><span style="color:#bfbfbf">Redirecting to /interaction/iZN5sa63mRrq29T36QRzI.</span></div>
</div>
</body></html>
